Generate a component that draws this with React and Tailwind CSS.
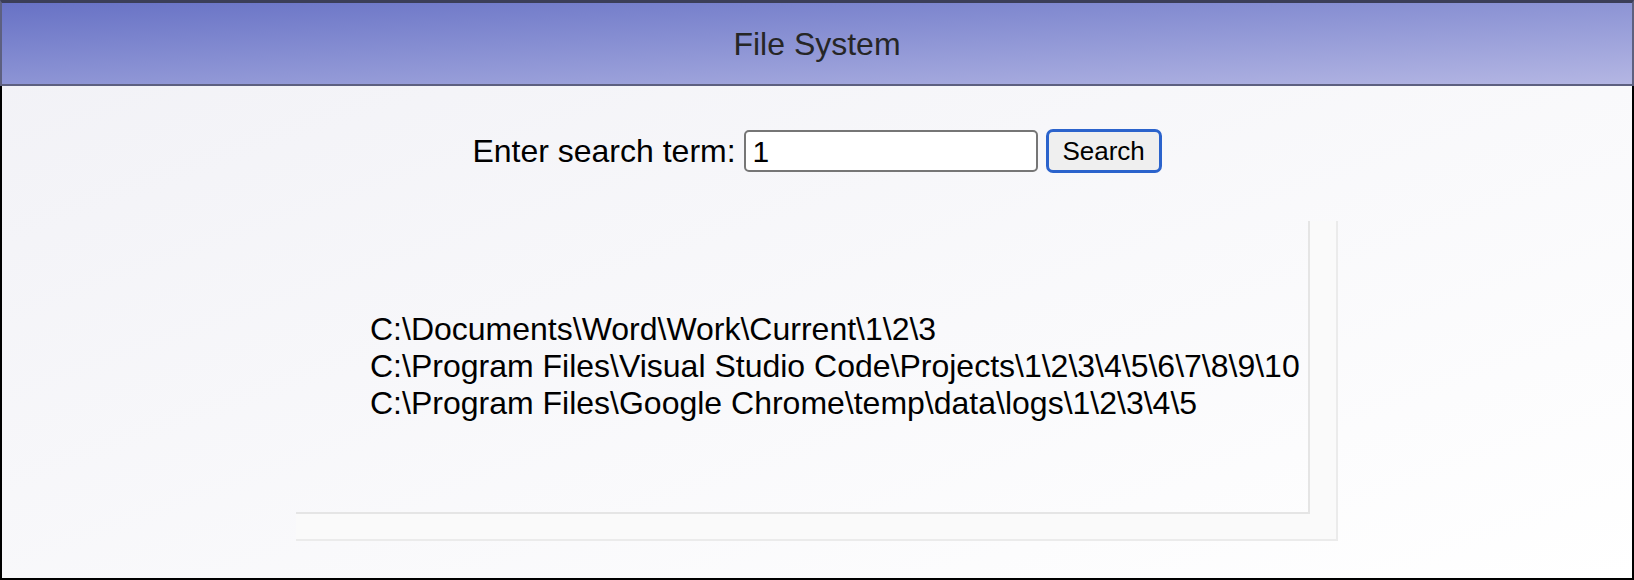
import { useState } from "react";

const paths = [
  "C:\\Documents\\Word\\Work\\Current\\1\\2\\3",
  "C:\\Program Files\\Visual Studio Code\\Projects\\1\\2\\3\\4\\5\\6\\7\\8\\9\\10",
  "C:\\Program Files\\Google Chrome\\temp\\data\\logs\\1\\2\\3\\4\\5",
];

export default function App() {
  const [term, setTerm] = useState("1");

  return (
    <div className="w-[1634px] h-[580px] flex flex-col font-['Liberation_Sans',Arial,sans-serif] text-black">
      {/* header */}
      <header className="h-[86px] shrink-0 flex items-center justify-center border-2 border-t-[3px] border-[#5d6080] border-t-[#3b3e58] bg-linear-to-br from-[#6872c5] to-[#b4b6e3]">
        <h1 className="text-[32px] text-[#262626]">File System</h1>
      </header>

      {/* content */}
      <main className="flex-1 flex flex-col items-center border-x-2 border-b-2 border-black bg-fixed bg-linear-to-br from-[#f1f1f6] to-white">
        <form
          className="mt-[43px] h-[44px] flex items-center gap-2"
          onSubmit={(e) => e.preventDefault()}
        >
          <label className="text-[32px] leading-none">Enter search term:</label>
          <input
            value={term}
            onChange={(e) => setTerm(e.target.value)}
            className="w-[294px] h-[42px] border-2 border-[#767676] rounded-[5px] bg-white pl-[7px] text-[30px] outline-none"
          />
          <button
            type="submit"
            className="w-[116px] h-[44px] border-[3px] border-[#2b63cc] rounded-[7px] bg-[#efefef] text-[26px] leading-none"
          >
            Search
          </button>
        </form>

        {/* results */}
        <div className="mt-[48px] w-[1042px] h-[320px] bg-[#fafafa] border-r-2 border-b-2 border-[#ebebeb]">
          <div className="w-[1014px] h-[293px] border-r-2 border-b-2 border-[#e5e5e5] bg-fixed bg-linear-to-br from-[#f1f1f6] to-white pl-[74px] pt-[90px]">
            <ul className="text-[32px] leading-[37px]">
              {paths.map((p) => (
                <li key={p}>{p}</li>
              ))}
            </ul>
          </div>
        </div>
      </main>
    </div>
  );
}
